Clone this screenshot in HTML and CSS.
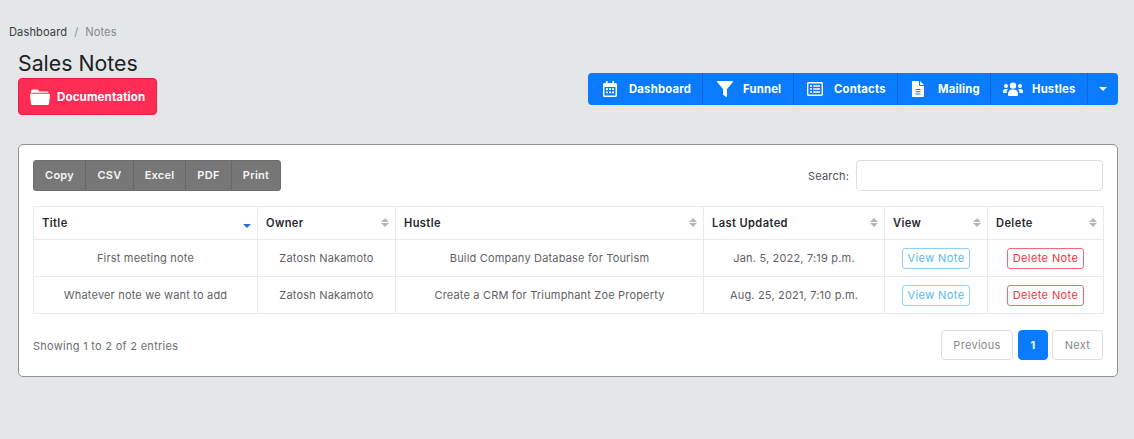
FILE: index.html
```html
<!DOCTYPE html>
<html lang="en">
<head>
<meta charset="utf-8">
<title>Sales Notes</title>
<link rel="stylesheet" href="styles.css">
</head>
<body>
<nav class="crumbs"><a>Dashboard</a><span class="sep">/</span><span class="cur">Notes</span></nav>
<header class="head">
  <div class="head-left">
    <h1>Sales Notes</h1>
    <a class="doc-btn">
      <svg class="folder" viewBox="0 0 21 18"><path d="M1 3.2C1 1.9 1.9 1 3.2 1h4.6l2.2 2.2h7.6c.9 0 1.6.5 1.9 1.3H3.6C2.5 4.5 1.7 4.8 1 5.6z" fill="#fff"/><path d="M0 7.2C0 6.2.7 5.7 1.6 5.7h17.8c.9 0 1.6.5 1.6 1.5l-1 8.6c-.1 1-.8 1.7-1.8 1.7H2.8c-1 0-1.7-.7-1.8-1.7z" fill="#fff"/></svg>
      Documentation
    </a>
  </div>
  <div class="nav-group">
    <a class="nav-btn w1"><svg class="ico" viewBox="0 0 14 16"><path fill="#fff" fill-rule="evenodd" d="M3 0h1.6v2h4.800V0H11v2h1.500C13.300 2 14 2.700 14 3.500v11c0 .8-.7 1.500-1.500 1.500h-11C.7 16 0 15.300 0 14.500v-11C0 2.700.7 2 1.500 2H3zM1.500 6v8.300c0 .1.100.2.200.2h10.600c.1 0 .2-.1.200-.2V6zM3 7.300h2v1.800H3zm3 0h2v1.800H6zm3 0h2v1.800H9zM3 10.500h2v1.800H3zm3 0h2v1.800H6zm3 0h2v1.800H9z"/></svg>Dashboard</a>
    <a class="nav-btn w2"><svg class="ico funnel" viewBox="0 0 16 16"><path fill="#fff" d="M.7 0h14.600c.6 0 .9.700.5 1.200L10 8v7.200c0 .6-.7 1-1.200.6l-2.400-1.800c-.2-.2-.4-.4-.4-.7V8L.2 1.200C-.2.700.1 0 .7 0z"/></svg>Funnel</a>
    <a class="nav-btn w3"><svg class="ico list" viewBox="0 0 16 14"><path fill="#fff" fill-rule="evenodd" d="M1.500 0h13C15.300 0 16 .7 16 1.500v11c0 .8-.7 1.500-1.500 1.500h-13C.7 14 0 13.300 0 12.500v-11C0 .7.700 0 1.500 0zm.1 1.400c-.1 0-.2.100-.2.200v10.800c0 .1.100.2.200.2h12.800c.1 0 .2-.1.200-.2V1.600c0-.1-.1-.2-.2-.2zM3 3.200h2v1.600H3zm3.200 0H13v1.600H6.200zM3 6.200h2v1.600H3zm3.200 0H13v1.600H6.200zM3 9.200h2v1.600H3zm3.200 0H13v1.600H6.200z"/></svg>Contacts</a>
    <a class="nav-btn w4"><svg class="ico doc" viewBox="0 0 12 16"><path fill="#fff" fill-rule="evenodd" d="M1 0h6v4.200c0 .5.300.8.800.8H12v10c0 .6-.4 1-1 1H1c-.6 0-1-.4-1-1V1c0-.6.400-1 1-1zm2.500 8v1h5V8zm0 2.200v1h5v-1zm0 2.200v1h5v-1zM8 0l4 4H8z"/></svg>Mailing</a>
    <a class="nav-btn w5"><svg class="ico users" viewBox="0 0 20 14"><g fill="#fff"><circle cx="10" cy="3.600" r="3.200"/><circle cx="3" cy="4" r="2"/><circle cx="17" cy="4" r="2"/><path d="M5 12c0-2.700 2-4.500 3.500-4.500h3C13 7.500 15 9.300 15 12v.7c0 .7-.5 1.300-1.200 1.300H6.200C5.500 14 5 13.400 5 12.700z"/><path d="M0 9.500C0 8 1 7 2.200 7h1.500c.5 0 .9.200 1.200.4C3.700 8.300 3 9.700 3.900 11H1c-.6 0-1-.4-1-1z"/><path d="M20 9.500C20 8 19 7 17.800 7h-1.500c-.5 0-.9.200-1.200.4 1.200.9 1.900 2.300 1 3.600H19c.6 0 1-.4 1-1z"/></g></svg>Hustles</a>
    <a class="nav-btn caret-btn"><span class="caret"></span></a>
  </div>
</header>
<main class="card">
  <div class="toolbar">
    <div class="export">
      <a>Copy</a><a>CSV</a><a>Excel</a><a>PDF</a><a>Print</a>
    </div>
    <label class="search">Search:<span class="search-box"></span></label>
  </div>
  <table>
    <colgroup><col class="c1"><col class="c2"><col class="c3"><col class="c4"><col class="c5"><col class="c6"></colgroup>
    <thead>
      <tr>
        <th class="sorted">Title</th><th>Owner</th><th>Hustle</th><th>Last Updated</th><th>View</th><th>Delete</th>
      </tr>
    </thead>
    <tbody>
      <tr>
        <td>First meeting note</td><td>Zatosh Nakamoto</td><td>Build Company Database for Tourism</td><td>Jan. 5, 2022, 7:19 p.m.</td>
        <td><a class="tag view">View Note</a></td><td><a class="tag del">Delete Note</a></td>
      </tr>
      <tr>
        <td>Whatever note we want to add</td><td>Zatosh Nakamoto</td><td>Create a CRM for Triumphant Zoe Property</td><td>Aug. 25, 2021, 7:10 p.m.</td>
        <td><a class="tag view">View Note</a></td><td><a class="tag del">Delete Note</a></td>
      </tr>
    </tbody>
  </table>
  <div class="foot">
    <span class="info">Showing 1 to 2 of 2 entries</span>
    <div class="pages"><a class="page prev">Previous</a><a class="page on">1</a><a class="page next">Next</a></div>
  </div>
</main>
</body>
</html>
```

FILE: styles.css
```css
* { box-sizing: border-box; }
html, body { height: 100%; }
body {
  margin: 0;
  padding: 25px 16px 0 9px;
  background: #e3e7e8;
  font-family: Inter, "Liberation Sans", sans-serif;
  font-size: 11px;
  letter-spacing: .18px;
  color: #6c6f72;
}
.crumbs { display: flex; height: 14px; line-height: 14px; color: #3a3d40; font-size: 11.1px; letter-spacing: .1px; }
.sep { margin: 0 7px; color: #8d9194; }
.cur { color: #83878a; }
.head {
  display: flex;
  justify-content: space-between;
  align-items: flex-start;
  margin: 0 0 0 9px;
  padding-top: 9px;
  height: 105px;
}
h1 { margin: 0; height: 30px; font-size: 21.3px; line-height: 30px; font-weight: 400; color: #1e2124; letter-spacing: 0; }
.doc-btn {
  display: flex; align-items: center;
  width: 139px; height: 37px;
  padding-left: 11px;
  background: #ff2d55;
  border: 1px solid #e81e46;
  border-radius: 4px;
  color: #fff; font-weight: 700; font-size: 11.6px; letter-spacing: .1px;
}
.folder { width: 20px; height: 18px; margin-right: 7px; flex: none; }
.nav-group {
  display: flex;
  height: 32px;
  margin-top: 25px;
  background: #0a7aff;
  border-radius: 4px;
  width: 530px;
  overflow: hidden;
}
.nav-btn {
  display: flex; align-items: center;
  height: 100%;
  padding-left: 15px;
  border-right: 1px solid #0866d6;
  color: #fff; font-weight: 700; font-size: 11.3px; letter-spacing: .2px;
}
.w1 { width: 115px; }
.w2 { width: 91px; padding-left: 14px; }
.w3 { width: 104px; padding-left: 13px; }
.w4 { width: 93px; padding-left: 14px; }
.w5 { width: 97px; padding-left: 12px; }
.caret-btn { flex: 1; border: 0; justify-content: center; padding: 0; }
.ico { width: 14px; height: 16px; margin-right: 12px; flex: none; }
.funnel { width: 16px; margin-right: 10px; }
.list { width: 16px; height: 14px; margin-right: 11px; }
.doc { width: 12px; margin-right: 14px; }
.users { width: 20px; height: 14px; margin-right: 9px; }
.caret { width: 0; height: 0; border: 4px solid transparent; border-top: 4px solid #fff; border-bottom: 0; }
.card {
  height: 233px;
  margin-left: 9px;
  padding: 15px 14px;
  background: #fff;
  border: 1px solid #8d9194;
  border-radius: 5px;
}
.toolbar { display: flex; justify-content: space-between; height: 31px; margin-bottom: 15px; }
.export {
  display: flex; height: 31px; width: 248px;
  background: #777;
  border: 1px solid #6d6d6d;
  border-radius: 3px;
  color: #f5f5f5; font-weight: 600; font-size: 11px; letter-spacing: .25px;
}
.export a { display: flex; align-items: center; justify-content: center; padding-bottom: 1px; border-right: 1px solid #666; width: 48px; }
.export a:nth-child(1) { width: 52px; }
.export a:nth-child(3) { width: 52px; }
.export a:nth-child(4) { width: 46px; }
.export a:nth-child(5) { border: 0; flex: 1; }
.search { display: flex; align-items: center; color: #4e5154; font-size: 11px; }
.search-box {
  display: block; width: 247px; height: 31px; margin-left: 7px;
  border: 1px solid #dcdfe1; border-radius: 4px; background: #fff;
}
table { width: 1070px; table-layout: fixed; border-collapse: collapse; }
.c1 { width: 224px; } .c2 { width: 138px; } .c3 { width: 308px; }
.c4 { width: 181px; } .c5 { width: 103px; } .c6 { width: 116px; }
th, td { border: 1px solid #e8eaec; padding: 0; }
th {
  height: 33px; padding-left: 8px;
  text-align: left;
  color: #26292c; font-weight: 600; font-size: 11.1px; letter-spacing: .4px;
  position: relative;
}
th::before, th::after {
  content: ""; position: absolute; right: 6px; width: 0; height: 0;
  border-left: 4px solid transparent; border-right: 4px solid transparent;
}
th::before { top: 11px; border-bottom: 4px solid #b4b7ba; }
th::after { top: 16px; border-top: 4px solid #b4b7ba; }
th.sorted::before { display: none; }
th.sorted::after { top: 17px; border-top-color: #2a6fdb; }
td { height: 37px; text-align: center; color: #5f6265; }
.tag {
  display: inline-block; height: 21px; line-height: 19px;
  padding: 0 4.8px;
  border: 1px solid; border-radius: 3px;
  background: #fff;
  letter-spacing: .4px;
}
.view { color: #54b9f5; border-color: #8dd0f8; }
.del { color: #f5343c; border-color: #f66a70; }
.foot { display: flex; justify-content: space-between; margin-top: 16px; height: 30px; }
.info { color: #6c6f72; line-height: 32px; letter-spacing: .28px; }
.pages { display: flex; gap: 5px; }
.page {
  display: flex; align-items: center; justify-content: center;
  height: 30px; border: 1px solid #dcdfe1; border-radius: 4px;
  color: #85888b; background: #fff; letter-spacing: .3px;
}
.prev { width: 72px; }
.next { width: 51px; margin-left: -1px; }
.on { width: 30px; background: #0a7aff; border-color: #0a7aff; color: #fff; font-weight: 700; }
```
